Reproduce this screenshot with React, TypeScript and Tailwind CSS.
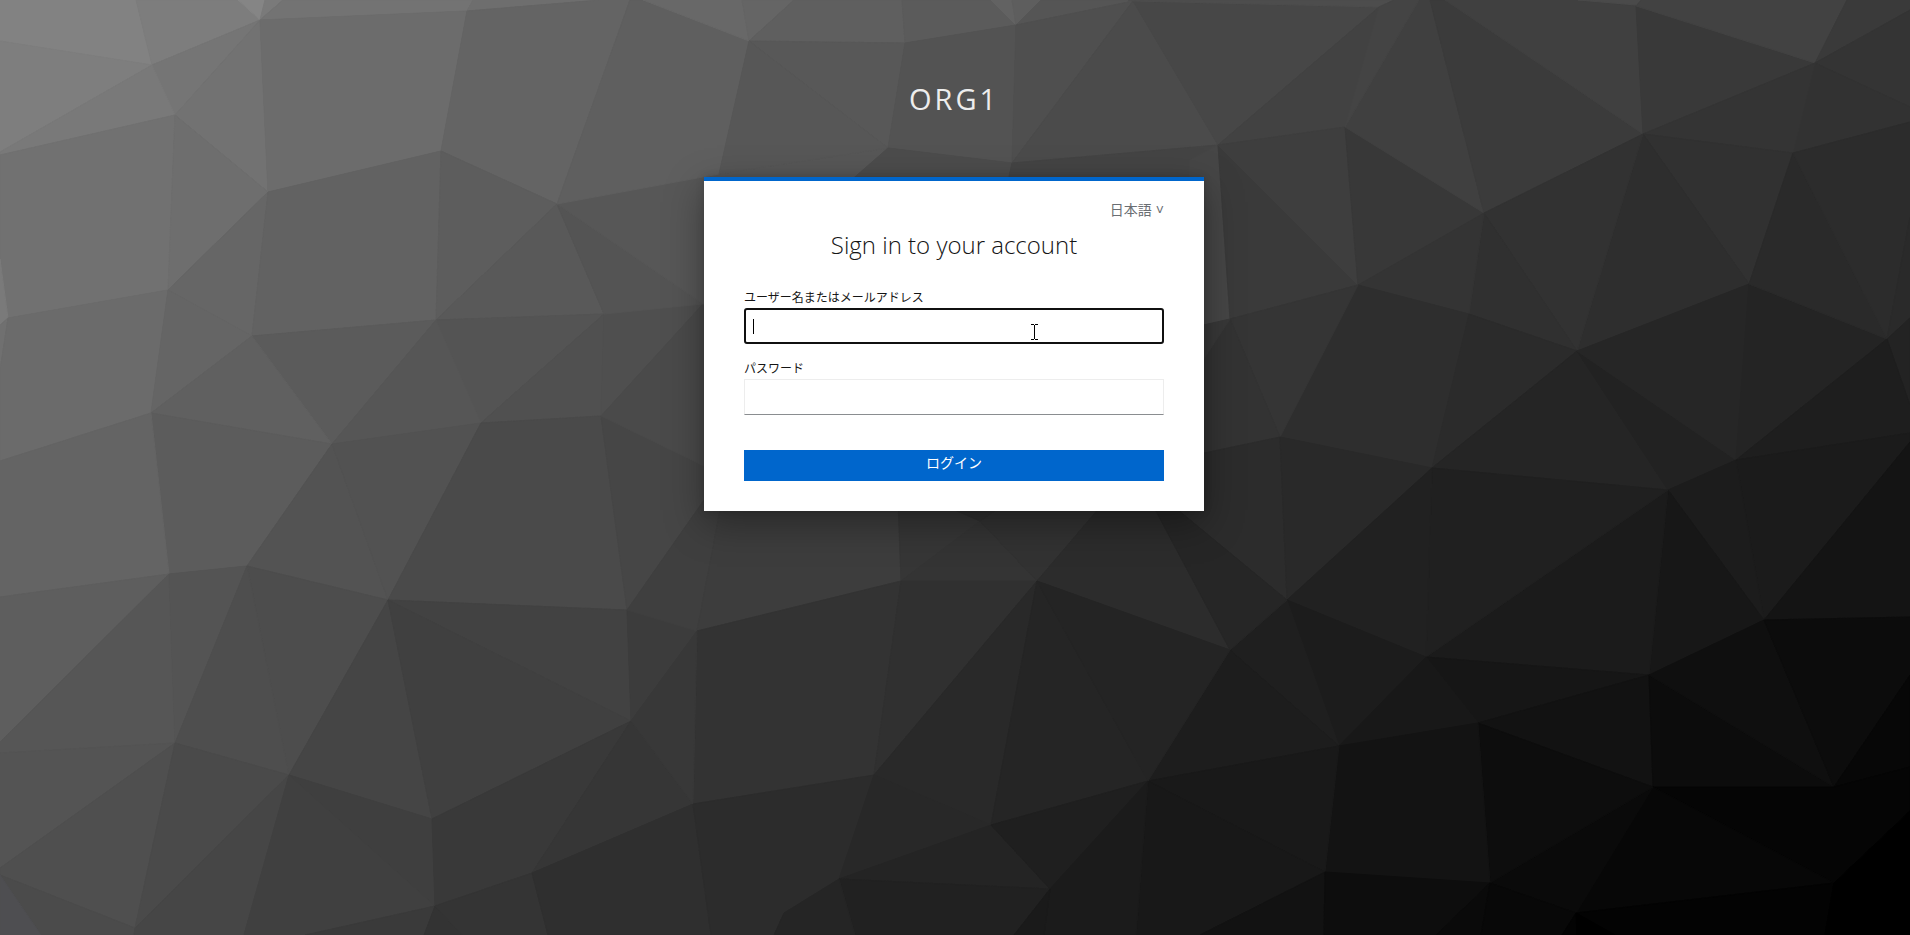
import React from "react";

type Facet = [fill: string, points: string];

const FACETS: Facet[] = [
  // upper left
  ["#828282", "0,0 136,0 152,65 0,41"],
  ["#7d7d7d", "136,0 238,0 260,20 152,65"],
  ["#858585", "238,0 265,0 260,20"],
  ["#7a7a7a", "265,0 283,0 260,20"],
  ["#737373", "283,0 473,0 467,11 260,20"],
  ["#6e6e6e", "473,0 600,0 467,11"],
  ["#757575", "152,65 260,20 175,115"],
  ["#7e7e7e", "0,41 152,65 0,152"],
  ["#797979", "152,65 175,115 0,155 0,152"],
  ["#727272", "260,20 268,192 175,115"],
  ["#6c6c6c", "260,20 467,11 441,151 268,192"],
  ["#646464", "467,11 600,0 630,0 557,204 441,151"],
  ["#717171", "0,155 175,115 168,290 8,318 0,259"],
  ["#6e6e6e", "175,115 268,192 168,290"],
  ["#666666", "168,290 268,192 252,336"],
  ["#626262", "268,192 441,151 436,320 252,336"],
  ["#5d5d5d", "441,151 557,204 436,320"],
  ["#7a7a7a", "0,259 8,318 0,325"],
  ["#707070", "0,325 8,318 0,370"],
  ["#6b6b6b", "8,318 168,290 151,413 0,461 0,370"],
  ["#656565", "168,290 252,336 151,413"],
  ["#5b5b5b", "252,336 436,320 332,444"],
  ["#606060", "151,413 252,336 332,444"],
  ["#595959", "557,204 604,314 436,320"],
  ["#545454", "436,320 604,314 481,423"],
  ["#565656", "436,320 481,423 332,444"],
  ["#505050", "604,314 601,416 481,423"],
  // lower left
  ["#5c5c5c", "151,413 332,444 247,566 169,574"],
  ["#646464", "0,461 151,413 169,574 0,597"],
  ["#5e5e5e", "0,597 169,574 0,742"],
  ["#565656", "0,742 169,574 175,743 0,753"],
  ["#545454", "169,574 247,566 175,743"],
  ["#535353", "332,444 388,600 247,566"],
  ["#525252", "332,444 481,423 388,600"],
  ["#4a4a4a", "481,423 601,416 627,610 388,600"],
  ["#4d4d4d", "247,566 388,600 289,775"],
  ["#4e4e4e", "247,566 289,775 175,743"],
  ["#545454", "0,753 175,743 0,868"],
  ["#4f4f4f", "0,868 175,743 135,928 0,875"],
  ["#4b4b4b", "0,875 135,928 134,935 41,935"],
  ["#4e4e51", "0,875 41,935 0,935"],
  ["#4a4a4a", "175,743 289,775 135,928"],
  ["#464646", "289,775 135,928 134,935 244,935"],
  ["#454545", "289,775 388,600 432,819"],
  ["#424242", "388,600 627,610 631,721"],
  ["#404040", "388,600 631,721 432,819"],
  ["#3f3f3f", "289,775 432,819 435,906"],
  ["#404040", "289,775 435,906 305,935 244,935"],
  ["#3a3a3a", "305,935 435,906 424,935"],
  ["#333333", "424,935 435,906 462,935"],
  ["#393939", "432,819 631,721 532,873 435,906"],
  ["#363636", "631,721 693,804 532,873"],
  ["#343434", "435,906 532,873 548,935 462,935"],
  ["#2f2f2f", "532,873 693,804 711,935 548,935"],
  // around the middle
  ["#3c3c3c", "627,610 697,631 631,721"],
  ["#464646", "601,416 704,466 704,511 627,610"],
  ["#4f4f4f", "604,314 703,304 601,416"],
  ["#4a4a4a", "601,416 703,304 900,304 900,520 704,466"],
  ["#545454", "557,204 703,304 604,314"],
  ["#575757", "557,204 719,174 888,148 888,304 703,304"],
  ["#5f5f5f", "630,0 643,0 749,41 719,174 557,204"],
  ["#686868", "643,0 742,0 749,41"],
  ["#656565", "742,0 794,0 749,41"],
  ["#5f5f5f", "794,0 902,0 905,43 749,41"],
  ["#5b5b5b", "902,0 991,0 1016,25 905,43"],
  ["#626262", "991,0 1012,0 1016,25"],
  ["#5e5e5e", "1012,0 1041,0 1016,25"],
  ["#555555", "1041,0 1128,0 1133,1 1016,25"],
  ["#585858", "749,41 905,43 888,148"],
  ["#575757", "749,41 888,148 719,174"],
  ["#535353", "905,43 1016,25 1012,163 888,148"],
  ["#4f4f4f", "1016,25 1133,1 1012,163"],
  ["#4b4b4b", "1133,1 1218,145 1012,163"],
  ["#474747", "1133,1 1379,7 1218,145"],
  ["#4d4d4d", "1128,0 1394,0 1379,7 1133,1"],
  ["#4c4c4c", "888,148 1012,163 1006,190 840,190"],
  ["#444444", "1012,163 1218,145 1218,190 1006,190"],
  ["#424242", "1379,7 1345,127 1218,145"],
  // upper right
  ["#464646", "1218,145 1230,319 1190,330 1190,160"],
  ["#3a3a3a", "1218,145 1358,285 1230,319"],
  ["#3e3e3e", "1218,145 1345,127 1358,285"],
  ["#383838", "1345,127 1484,213 1358,285"],
  ["#404040", "1345,127 1419,0 1430,0 1484,213"],
  ["#444444", "1379,7 1394,0 1419,0 1345,127"],
  ["#3b3b3b", "1430,0 1445,0 1643,134 1484,213"],
  ["#404040", "1445,0 1578,0 1636,6 1643,134"],
  ["#4a4a4a", "1578,0 1641,0 1636,5"],
  ["#393939", "1636,6 1815,63 1643,134"],
  ["#424242", "1641,0 1847,0 1815,63 1636,6"],
  ["#3a3a3a", "1847,0 1910,0 1910,10 1815,63"],
  ["#343434", "1815,63 1910,10 1910,107"],
  ["#323232", "1815,63 1910,107 1910,122 1793,153"],
  ["#343434", "1643,134 1815,63 1793,153"],
  ["#313131", "1643,134 1793,153 1749,284"],
  ["#2e2e2e", "1643,134 1749,284 1577,351"],
  ["#323232", "1484,213 1643,134 1577,351"],
  ["#303030", "1484,213 1577,351 1469,314"],
  ["#343434", "1358,285 1484,213 1469,314"],
  ["#2e2e2e", "1358,285 1469,314 1432,468 1280,437"],
  ["#2b2b2b", "1469,314 1577,351 1432,468"],
  ["#353535", "1230,319 1358,285 1280,437"],
  ["#333333", "1230,319 1280,437 1190,456 1190,380"],
  ["#383838", "1230,319 1190,380 1190,328"],
  ["#2c2c2c", "1280,437 1287,600 1179,511 1190,456"],
  ["#292929", "1280,437 1432,468 1287,600"],
  ["#252525", "1432,468 1577,351 1668,490"],
  ["#222222", "1577,351 1736,460 1668,490"],
  ["#262626", "1577,351 1749,284 1736,460"],
  ["#242424", "1749,284 1887,339 1736,460"],
  ["#2a2a2a", "1793,153 1887,339 1749,284"],
  ["#2c2c2c", "1793,153 1910,122 1910,217 1887,339"],
  ["#2a2a2a", "1910,217 1910,318 1887,339"],
  ["#232323", "1910,318 1910,405 1887,339"],
  ["#1e1e1e", "1887,339 1910,405 1910,433 1736,460"],
  ["#1b1b1b", "1736,460 1910,433 1910,442 1764,620"],
  // lower right
  ["#141414", "1910,442 1910,617 1764,620"],
  ["#1c1c1c", "1736,460 1764,620 1668,490"],
  ["#171717", "1668,490 1764,620 1649,675"],
  ["#1b1b1b", "1668,490 1649,675 1426,657"],
  ["#202020", "1432,468 1668,490 1426,657"],
  ["#212121", "1432,468 1426,657 1287,600"],
  ["#1c1c1c", "1287,600 1426,657 1339,746"],
  ["#1f1f1f", "1287,600 1339,746 1230,650"],
  ["#1d1d1d", "1230,650 1339,746 1148,781"],
  ["#161616", "1426,657 1649,675 1478,723"],
  ["#181818", "1426,657 1478,723 1339,746"],
  ["#121212", "1478,723 1649,675 1653,787"],
  ["#0c0c0c", "1649,675 1834,787 1653,787"],
  ["#0f0f0f", "1649,675 1764,620 1834,787"],
  ["#0c0c0c", "1764,620 1910,617 1910,675 1834,787"],
  ["#070707", "1834,787 1910,675 1910,767"],
  ["#050505", "1653,787 1834,787 1910,767 1910,811 1834,883"],
  ["#070707", "1653,787 1834,883 1576,913"],
  ["#0a0a0a", "1653,787 1576,913 1490,883"],
  ["#0d0d0d", "1478,723 1653,787 1490,883"],
  ["#131313", "1339,746 1478,723 1490,883 1325,872"],
  ["#191919", "1339,746 1325,872 1148,781"],
  ["#181818", "1148,781 1325,872 1200,935 1136,935"],
  ["#121212", "1325,872 1324,935 1200,935"],
  ["#0d0d0d", "1325,872 1490,883 1436,935 1324,935"],
  ["#0a0a0a", "1490,883 1481,935 1436,935"],
  ["#080808", "1490,883 1576,913 1562,935 1481,935"],
  ["#030303", "1576,913 1834,883 1825,935 1562,935"],
  ["#000000", "1576,913 1615,935 1577,935"],
  ["#000000", "1834,883 1910,811 1910,935 1825,935"],
  // lower middle
  ["#3f3f3f", "627,610 704,500 722,500 697,631"],
  ["#3d3d3d", "697,631 722,500 898,500 901,581"],
  ["#363636", "901,581 898,500 932,500 980,521"],
  ["#343434", "901,581 980,521 1037,581"],
  ["#323232", "980,521 1010,500 1106,500 1037,581"],
  ["#303030", "932,500 1010,500 980,521"],
  ["#2c2c2c", "1037,581 1106,500 1150,500 1230,650"],
  ["#262626", "1150,500 1166,500 1287,600 1230,650"],
  ["#333333", "697,631 901,581 874,775 693,804"],
  ["#303030", "901,581 1037,581 874,775"],
  ["#292929", "1037,581 991,825 874,775"],
  ["#252525", "1037,581 1148,781 991,825"],
  ["#242424", "1037,581 1230,650 1148,781"],
  ["#383838", "631,721 697,631 693,804"],
  ["#2c2c2c", "693,804 874,775 839,879 784,913 774,935 711,935"],
  ["#282828", "874,775 991,825 839,879"],
  ["#242424", "839,879 991,825 1050,889"],
  ["#212121", "839,879 1050,889 1014,935 855,935"],
  ["#252525", "839,879 855,935 774,935 784,913"],
  ["#1f1f1f", "991,825 1148,781 1050,889"],
  ["#1b1b1b", "1050,889 1148,781 1136,935 1044,935"],
  ["#1a1a1a", "1050,889 1044,935 1014,935"],
];

function FacetedBackdrop() {
  return (
    <svg
      className="absolute inset-0 h-full w-full"
      viewBox="0 0 1910 935"
      preserveAspectRatio="xMidYMid slice"
      aria-hidden="true"
    >
      <rect width="1910" height="935" fill="#3a3a3a" />
      {FACETS.map(([fill, points]) => (
        <polygon key={points} points={points} fill={fill} stroke={fill} strokeWidth="1" strokeLinejoin="round" />
      ))}
    </svg>
  );
}

function TextPointer() {
  return (
    <svg
      className="pointer-events-none absolute top-4 left-[287px]"
      width="7"
      height="16"
      viewBox="0 0 7 16"
      shapeRendering="crispEdges"
      aria-hidden="true"
    >
      <path d="M0 0h3v1H0zM4 0h3v1H4zM3 1h1v14H3zM0 15h3v1H0zM4 15h3v1H4z" fill="#000" />
    </svg>
  );
}

export default function App() {
  return (
    <div className="relative min-h-screen overflow-hidden bg-[#3a3a3a] font-['Open_Sans','Noto_Sans_CJK_JP',sans-serif] text-[#151515]">
      <FacetedBackdrop />
      <div className="relative flex flex-col items-center pr-0.5">
        <header className="pt-[79px] pb-[58px] text-center text-[29px] leading-10 tracking-[3px] text-[#ededed] uppercase">
          ORG1
        </header>
        <main className="w-full max-w-[500px] border-t-4 border-[#0066cc] bg-white px-10 pt-[19px] pb-[30px] shadow-[0_12px_36px_rgba(3,3,3,0.35),0_0_8px_rgba(3,3,3,0.15)]">
          <div className="flex justify-end text-[14px] leading-5 text-[#6a6e73]">
            <a href="#locale" className="flex gap-1">
              日本語 <span aria-hidden="true">˅</span>
            </a>
          </div>
          <h1 className="mt-[9px] text-center text-2xl leading-8 font-light">Sign in to your account</h1>
          <form className="mt-[29px]" onSubmit={(e) => e.preventDefault()}>
            <label htmlFor="username" className="mb-0.5 block text-[12px] leading-4">
              ユーザー名またはメールアドレス
            </label>
            <div className="relative">
              <input
                id="username"
                name="username"
                type="text"
                className="block h-9 w-full rounded-[3px] border-2 border-[#101010] bg-white px-2 text-base outline-none"
              />
              <span className="pointer-events-none absolute top-[11px] left-[9px] h-[15px] w-px bg-black" />
              <TextPointer />
            </div>
            <label htmlFor="password" className="mt-[17px] mb-0.5 block text-[12px] leading-4">
              パスワード
            </label>
            <input
              id="password"
              name="password"
              type="password"
              className="block h-9 w-full border border-[#ededed] border-b-[#8a8d90] bg-white px-2 text-base outline-none"
            />
            <button
              type="submit"
              className="mt-[35px] block h-[31px] w-full bg-[#0066cc] pb-1.5 text-[14px] leading-5 text-white"
            >
              ログイン
            </button>
          </form>
        </main>
      </div>
    </div>
  );
}
